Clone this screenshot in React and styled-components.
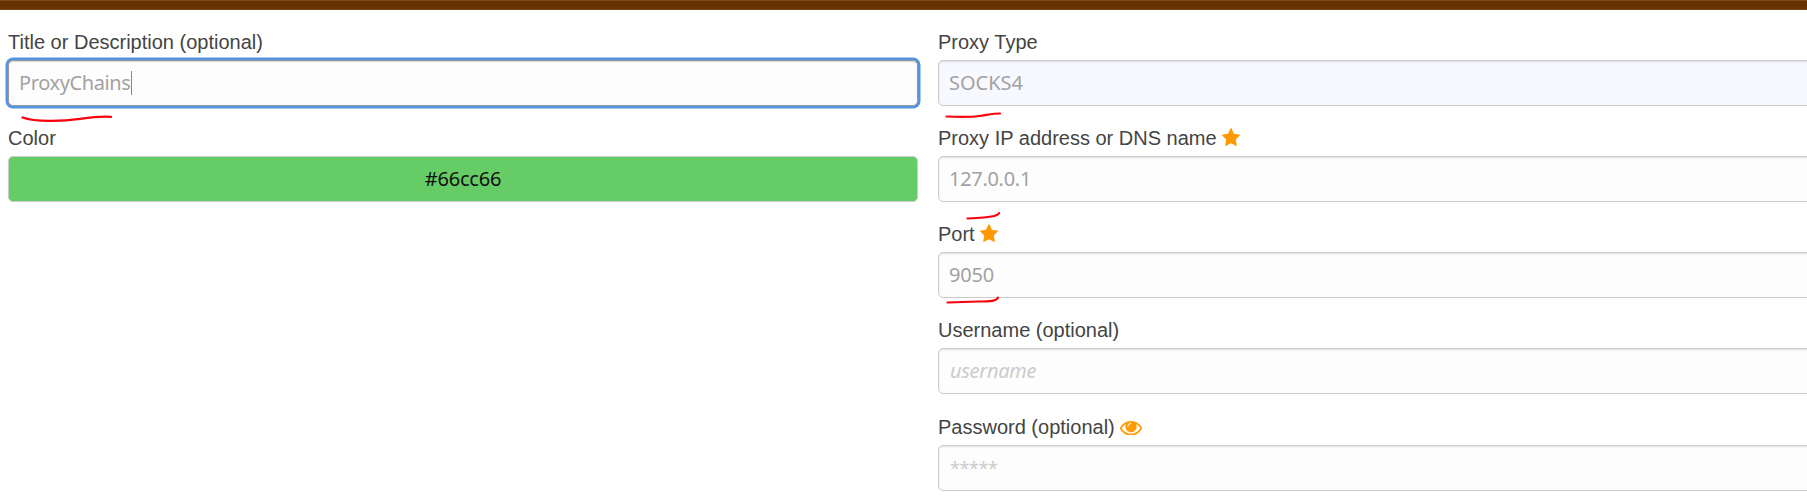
import React from "react";
import styled, { createGlobalStyle, css } from "styled-components";

const GlobalStyle = createGlobalStyle`
  * { box-sizing: border-box; }
  body {
    margin: 0;
    background: #fff;
    overflow: hidden;
    font-family: "Liberation Sans", Arial, sans-serif;
  }
`;

const Page = styled.main`
  position: relative;
  width: 1807px;
  height: 496px;
  overflow: hidden;
`;

const HeaderBar = styled.header`
  height: 10px;
  background: #663300;
  border-top: 1px solid #7a4d20;
  border-bottom: 1px solid #75451a;
`;

const Form = styled.form`
  display: grid;
  grid-template-columns: 910px 910px;
  column-gap: 20px;
  padding: 20px 0 0 8px;
`;

const Column = styled.div`
  display: flex;
  flex-direction: column;
  gap: 20px;
`;

const Field = styled.div`
  display: flex;
  flex-direction: column;
  padding-top: ${(p) => (p.$spaced ? "1px" : "0")};
`;

const Label = styled.label`
  display: flex;
  gap: 5px;
  height: 30px;
  font-size: 20px;
  line-height: 24px;
  color: #444;
  white-space: nowrap;
`;

const Control = styled.div`
  display: flex;
  align-items: center;
  height: 46px;
  padding: 0 10px;
  border: 1px solid #ccc;
  border-radius: 5px;
  background: ${(p) => p.$fill || "#fdfdfd"};
  box-shadow: inset 0 1px 2px rgba(0, 0, 0, 0.12);
  color: #a2a2a2;
  font-family: "Noto Sans", sans-serif;
  font-size: 20px;
  line-height: 26px;
  letter-spacing: ${(p) => p.$tracking || 0}px;
  ${(p) => p.$focused && css`
    border-color: #999;
    box-shadow: 0 0 0 2.5px #5594e0, inset 0 1px 1px rgba(0, 0, 0, 0.15);
  `}
  ${(p) => p.$swatch && css`
    justify-content: center;
    color: #111;
    box-shadow: none;
  `}
`;

const Placeholder = styled.span`
  color: #ccc;
  padding-left: 1px;
  font-style: ${(p) => (p.$italic ? "italic" : "normal")};
  font-size: ${(p) => (p.$masked ? "18px" : "20px")};
`;

const Caret = styled.span`
  width: 1px;
  height: 24px;
  margin-left: 1px;
  background: #888;
`;

const StarSvg = styled.svg`
  width: 18px;
  height: 18px;
  margin-top: 2px;
  fill: #ff9900;
`;

const EyeSvg = styled.svg`
  width: 22px;
  height: 14.5px;
  margin-top: 5.5px;
  fill: #ff9900;
  stroke: #ff9900;
  stroke-width: 25;
`;

const Marks = styled.svg`
  position: absolute;
  inset: 0;
  width: 1807px;
  height: 496px;
  pointer-events: none;
  fill: none;
  stroke: #f8000c;
  stroke-width: 2.2;
  stroke-linecap: round;
  stroke-linejoin: round;
`;

const Star = () => (
  <StarSvg viewBox="64 32 1664 1587" preserveAspectRatio="none">
    <path d="M1728 647q0 22-26 48l-363 354 86 500q1 7 1 20 0 21-10.5 35.5t-30.5 14.5q-19 0-40-12l-449-236-449 236q-22 12-40 12-21 0-31.5-14.5t-10.5-35.5q0-6 2-20l86-500-364-354q-25-27-25-48 0-37 56-46l502-73 225-455q19-41 49-41t49 41l225 455 502 73q56 9 56 46z" />
  </StarSvg>
);

const Eye = () => (
  <EyeSvg viewBox="0 384 1792 1152" preserveAspectRatio="none">
    <path d="M1664 960q-152-236-381-353 61 104 61 225 0 185-131.500 316.500t-316.500 131.500-316.500-131.500-131.500-316.500q0-121 61-225-229 117-381 353 133 205 333.500 326.500t434.500 121.500 434.500-121.500 333.500-326.500zM944 576q0-20-14-34t-34-14q-125 0-214.500 89.500t-89.500 214.500q0 20 14 34t34 14 34-14 14-34q0-86 61-147t147-61q20 0 34-14t14-34zM1792 960q0 34-20 69-140 230-376.500 368.500t-499.500 138.500-499.500-139-376.500-368q-20-35-20-69t20-69q140-229 376.500-368t499.500-139 499.500 139 376.500 368q20 35 20 69z" />
  </EyeSvg>
);

export default function App() {
  return (
    <Page>
      <GlobalStyle />
      <HeaderBar />
      <Form>
        <Column>
          <Field>
            <Label>Title or Description (optional)</Label>
            <Control $focused $tracking={-0.4}>ProxyChains<Caret /></Control>
          </Field>
          <Field>
            <Label>Color</Label>
            <Control $swatch $fill="#66cc66" $tracking={-0.2}>#66cc66</Control>
          </Field>
        </Column>
        <Column>
          <Field>
            <Label>Proxy Type</Label>
            <Control $fill="#f8f8ff">SOCKS4</Control>
          </Field>
          <Field>
            <Label>Proxy IP address or DNS name <Star /></Label>
            <Control $tracking={-0.3}>127.0.0.1</Control>
          </Field>
          <Field>
            <Label>Port <Star /></Label>
            <Control $tracking={-0.2}>9050</Control>
          </Field>
          <Field>
            <Label>Username (optional)</Label>
            <Control $tracking={-0.3}><Placeholder $italic>username</Placeholder></Control>
          </Field>
          <Field $spaced>
            <Label>Password (optional) <Eye /></Label>
            <Control $tracking={-0.4}><Placeholder $masked>*****</Placeholder></Control>
          </Field>
        </Column>
      </Form>
      <Marks viewBox="0 0 1807 496">
        <path d="M22.500 117.500C35 122 62 121.500 80 118.800C93 117 102 116 111 116.800" />
        <path d="M946.500 116.500C958 117 970 117.200 979 116C987 115 993 113.500 1000 113.500" />
        <path d="M967.500 218.500C980 218 990 217 994 216C997 215 999 214.500 999 213" />
        <path d="M947.500 302.500L979 301.500C990 301.500 997 301 998 297.500" />
      </Marks>
    </Page>
  );
}
